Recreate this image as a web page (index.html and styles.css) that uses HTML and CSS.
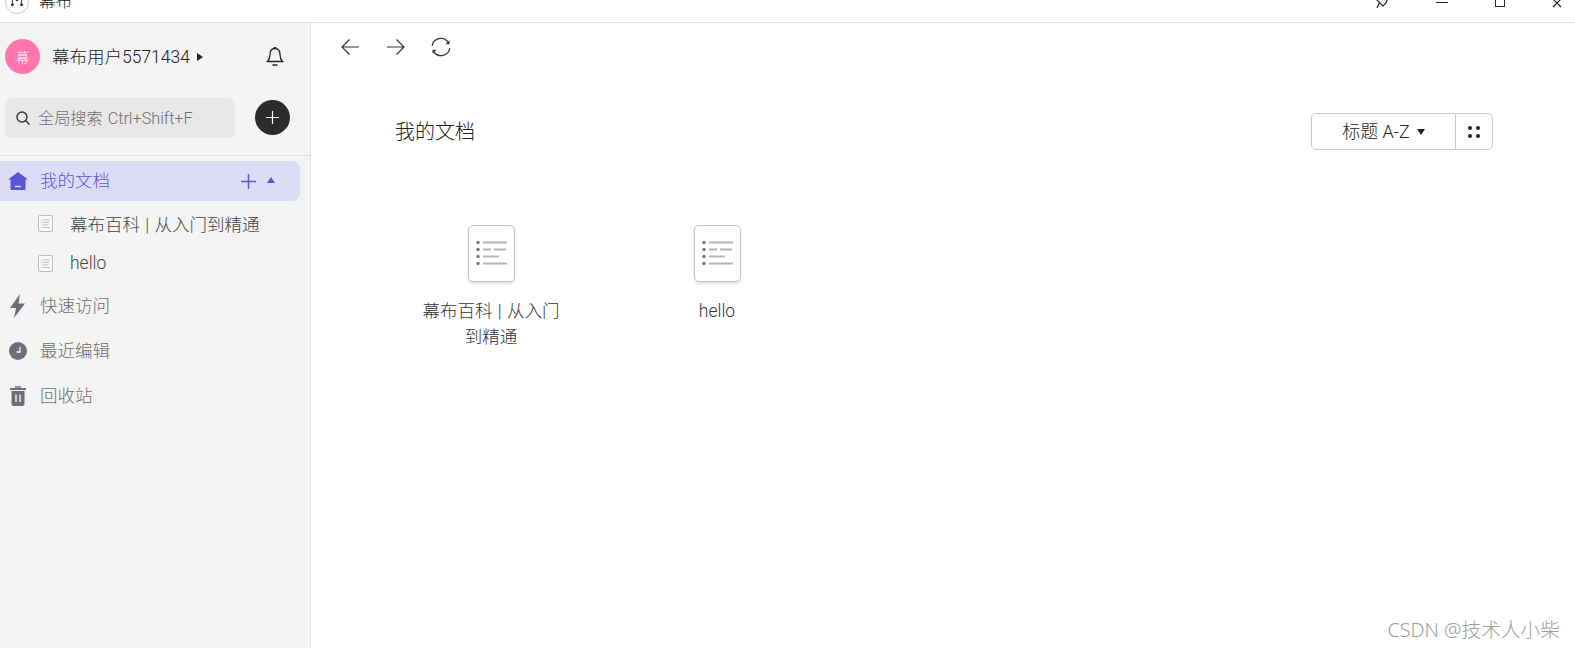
FILE: index.html
```html
<!DOCTYPE html>
<html lang="zh">

<head>
  <meta charset="utf-8" />
  <title>幕布</title>
  <link rel="stylesheet" href="styles.css">
</head>

<body>
  <header class="titlebar">
    <div class="app">
      <span class="app-logo">
        <svg width="24" height="24" viewBox="0 0 24 24">
          <circle cx="7" cy="15" r="1.6" fill="#333"/>
          <circle cx="12" cy="10" r="1.3" fill="#333"/>
          <circle cx="17" cy="15" r="1.6" fill="#333"/>
          <path d="M7 9v5M17 9v5" stroke="#333" fill="none"/>
        </svg>
      </span>
      <span class="app-name">幕布</span>
    </div>
    <div class="win-controls">
      <svg class="win-pin" width="18" height="18" viewBox="0 0 18 18"><path d="M16 4l-3 8-3 3-7-7 3-3M6.500 11.500L4 17" fill="none" stroke="#222" stroke-width="1.200"/></svg>
      <span class="win-min"></span>
      <span class="win-max"></span>
      <svg class="win-close" width="10" height="10" viewBox="0 0 10 10"><path d="M1 1l8 8M9 1l-8 8" stroke="#222" stroke-width="1.100"/></svg>
    </div>
  </header>

  <div class="main">
    <aside class="sidebar">
      <div class="user">
        <span class="avatar">幕</span>
        <span class="user-name">幕布用户5571434</span>
        <span class="caret-right"></span>
        <svg class="bell" width="20" height="22" viewBox="0 0 20 22"><path d="M10 2.500c-3.500 0-5 2.500-5 6 0 3.500-1 5.500-2.500 7h15C16 14 15 12 15 8.500c0-3.500-1.500-6-5-6zM9 2.500C9 1 11 1 11 2.500M7.500 19h5" fill="none" stroke="#222" stroke-width="1.300"/></svg>
      </div>

      <div class="search-row">
        <div class="search">
          <svg width="16" height="16" viewBox="0 0 16 16"><circle cx="7" cy="7" r="5" fill="none" stroke="#333" stroke-width="1.400"/><path d="M10.500 10.500l4 4" stroke="#333" stroke-width="1.400"/></svg>
          <span class="search-text">全局搜索 Ctrl+Shift+F</span>
        </div>
        <button class="add-btn">
          <svg width="13" height="13" viewBox="0 0 13 13"><path d="M6.500 0v13M0 6.500h13" stroke="#fff" stroke-width="1.200"/></svg>
        </button>
      </div>

      <nav class="tree">
        <div class="tree-row active">
          <svg class="tree-icon" width="20" height="18" viewBox="0 0 20 18"><path d="M10 0L0 7.500h2.500V17a1 1 0 0 0 1 1h13a1 1 0 0 0 1-1V7.500H20z" fill="#5856d6"/><path d="M7 14.500h6" stroke="#dcdcf7" stroke-width="1.400"/></svg>
          <span class="tree-label">我的文档</span>
          <svg class="row-plus" width="15" height="15" viewBox="0 0 15 15"><path d="M7.500 0v15M0 7.500h15" stroke="#5856d6" stroke-width="1.500"/></svg>
          <span class="caret-up"></span>
        </div>
        <div class="tree-row child">
          <svg class="doc-mini" width="15" height="17" viewBox="0 0 15 17"><rect x=".5" y=".5" width="14" height="16" rx="1.500" fill="#fafafa" stroke="#bbb"/><path d="M3 5h1M5 5h7M3 7.500h1M5 7.500h6M3 10h1M5 10h5M3 12.500h1M5 12.500h7" stroke="#bbb"/></svg>
          <span class="tree-label">幕布百科 | 从入门到精通</span>
        </div>
        <div class="tree-row child">
          <svg class="doc-mini" width="15" height="17" viewBox="0 0 15 17"><rect x=".5" y=".5" width="14" height="16" rx="1.500" fill="#fafafa" stroke="#bbb"/><path d="M3 5h1M5 5h7M3 7.500h1M5 7.500h6M3 10h1M5 10h5M3 12.500h1M5 12.500h7" stroke="#bbb"/></svg>
          <span class="tree-label">hello</span>
        </div>
        <div class="tree-row muted">
          <svg class="tree-icon" width="18" height="24" viewBox="0 0 18 24"><path d="M11 0L1 14h6l-2 10 11-14.500h-6.500z" fill="#6e6e78"/></svg>
          <span class="tree-label">快速访问</span>
        </div>
        <div class="tree-row muted">
          <svg class="tree-icon" width="18" height="18" viewBox="0 0 18 18"><circle cx="9" cy="9" r="9" fill="#6e6e78"/><path d="M11 5v5H7.500" fill="none" stroke="#f4f4f4" stroke-width="1.300"/></svg>
          <span class="tree-label">最近编辑</span>
        </div>
        <div class="tree-row muted">
          <svg class="tree-icon" width="18" height="20" viewBox="0 0 18 20"><path d="M1 3h16" stroke="#6e6e78" stroke-width="2"/><path d="M6 1h6" stroke="#6e6e78" stroke-width="1.500"/><path d="M2.500 5h13v13a2 2 0 0 1-2 2h-9a2 2 0 0 1-2-2z" fill="#6e6e78"/><path d="M7 8.500v7.500M11 8.500v7.500" stroke="#f4f4f4" stroke-width="1.400"/></svg>
          <span class="tree-label">回收站</span>
        </div>
      </nav>
    </aside>

    <section class="content">
      <div class="toolbar">
        <svg width="20" height="18" viewBox="0 0 20 18"><path d="M19 9H2M9.500 1.500L2 9l7.500 7.500" fill="none" stroke="#333" stroke-width="1.200"/></svg>
        <svg width="20" height="18" viewBox="0 0 20 18"><path d="M1 9h17M10.500 1.500L18 9l-7.500 7.500" fill="none" stroke="#333" stroke-width="1.200"/></svg>
        <svg width="20" height="20" viewBox="0 0 20 20"><path d="M1.200 9A8.800 8.800 0 0 1 17 5M18.800 11A8.800 8.800 0 0 1 3 15" fill="none" stroke="#333" stroke-width="1.300"/><path d="M18.500 3.200v4h-4zM1.500 16.800v-4h4z" fill="#333"/></svg>
      </div>

      <div class="heading-row">
        <h1 class="heading">我的文档</h1>
        <div class="sort-group">
          <button class="sort-btn"><span class="sort-text">标题 A-Z</span><span class="caret-down"></span></button>
          <button class="view-btn">
            <svg width="14" height="14" viewBox="0 0 14 14" fill="#222"><circle cx="3" cy="3" r="2"/><circle cx="11" cy="3" r="2"/><circle cx="3" cy="11" r="2"/><circle cx="11" cy="11" r="2"/></svg>
          </button>
        </div>
      </div>

      <div class="docs">
        <div class="doc">
          <div class="doc-icon">
            <svg width="47" height="57" viewBox="0 0 47 57"><g fill="#777"><circle cx="10" cy="17.500" r="1.700"/><circle cx="10" cy="24.500" r="1.700"/><circle cx="10" cy="31.500" r="1.700"/><circle cx="10" cy="38.500" r="1.700"/></g><path d="M15 17.500h24M15 24.500h8M26 24.500h12M15 31.500h16M15 38.500h24" stroke="#b4b4b4" stroke-width="2" fill="none"/></svg>
          </div>
          <p class="doc-name">幕布百科 | 从入门到精通</p>
        </div>
        <div class="doc">
          <div class="doc-icon">
            <svg width="47" height="57" viewBox="0 0 47 57"><g fill="#777"><circle cx="10" cy="17.500" r="1.700"/><circle cx="10" cy="24.500" r="1.700"/><circle cx="10" cy="31.500" r="1.700"/><circle cx="10" cy="38.500" r="1.700"/></g><path d="M15 17.500h24M15 24.500h8M26 24.500h12M15 31.500h16M15 38.500h24" stroke="#b4b4b4" stroke-width="2" fill="none"/></svg>
          </div>
          <p class="doc-name">hello</p>
        </div>
      </div>

      <div class="watermark">CSDN @技术人小柴</div>
    </section>
  </div>
</body>

</html>
```

FILE: styles.css
```css
/*
  colors:
    sidebar   #f4f4f4
    line      #e2e2e2
    purple    #5856d6
 */
* {
  box-sizing: border-box;
}

html, body {
  height: 100%;
}

body {
  margin: 0;
  height: 648px;
  overflow: hidden;
  display: flex;
  flex-direction: column;
  background-color: #fff;
  color: #333;
  font-family: Roboto, "Noto Sans CJK SC", sans-serif;
  font-size: 17.5px;
  font-weight: 300;
  word-spacing: 1px;
}

button {
  font: inherit;
  color: inherit;
  background: none;
  border: none;
  padding: 0;
}

/* title bar, its top is cut off in the picture */
.titlebar {
  flex: none;
  height: 23px;
  border-bottom: 1px solid #e2e2e2;
  display: flex;
  justify-content: space-between;
  align-items: flex-end;
  overflow: hidden;
}

.app {
  display: flex;
  align-items: center;
  margin-left: 5px;
  margin-bottom: 6px;
}

.app-logo {
  flex: none;
  width: 24px;
  height: 24px;
  border: 1px solid #c8c8c8;
  border-radius: 50%;
  display: flex;
  align-items: center;
  justify-content: center;
}

.app-name {
  margin-left: 10px;
  padding-bottom: 4px;
  color: #222;
  font-size: 16.5px;
}

.win-controls {
  display: flex;
  align-items: flex-end;
  margin-right: 13px;
  margin-bottom: 13px;
}

.win-min {
  width: 12px;
  height: 1px;
  background-color: #222;
  margin-left: 45px;
  margin-bottom: 6px;
}

.win-max {
  width: 10px;
  height: 10px;
  border: 1px solid #222;
  margin-left: 47px;
  margin-bottom: 2px;
}

.win-close {
  margin-left: 47px;
  margin-bottom: 1px;
}

.main {
  flex: 1;
  display: flex;
  min-height: 0;
}

/* sidebar */
.sidebar {
  flex: none;
  width: 311px;
  background-color: #f4f4f4;
  border-right: 1px solid #e2e2e2;
}

.user {
  display: flex;
  align-items: center;
  height: 35px;
  margin-top: 16px;
  padding-left: 5px;
}

.avatar {
  flex: none;
  width: 35px;
  height: 35px;
  border-radius: 50%;
  background-color: #ff75ac;
  color: #fff;
  font-size: 13px;
  display: flex;
  align-items: center;
  justify-content: center;
}

.user-name {
  margin-left: 12px;
  padding-bottom: 3px;
  color: #222;
}

.caret-right {
  margin-left: 7px;
  border-left: 6px solid #222;
  border-top: 4.5px solid transparent;
  border-bottom: 4.5px solid transparent;
}

.bell {
  margin-left: 62px;
}

.search-row {
  display: flex;
  height: 40px;
  margin-top: 24px;
  padding-left: 5px;
}

.search {
  width: 230px;
  height: 40px;
  border-radius: 6px;
  background-color: #e8e8ea;
  display: flex;
  align-items: center;
  gap: 7px;
  padding-left: 10px;
  color: #6e6e6e;
  font-size: 16.2px;
}

.search-text {
  padding-bottom: 2px;
}

.add-btn {
  width: 35px;
  height: 35px;
  margin-top: 2px;
  margin-left: 20px;
  border-radius: 50%;
  background-color: #2c2c2e;
  display: flex;
  align-items: center;
  justify-content: center;
}

.tree {
  margin-top: 17px;
  padding-top: 5px;
  border-top: 1px solid #e2e2e2;
}

.tree-row {
  display: flex;
  align-items: center;
  height: 40px;
  padding-left: 8px;
  color: #444;
}

.tree-row.active {
  width: 300px;
  margin-bottom: 2px;
  border-radius: 0 8px 8px 0;
  background-color: #dcdcf7;
  color: #5856d6;
}

.tree-row.active .tree-label {
  padding-bottom: 3px;
}

.tree-row.child {
  padding-left: 38px;
}

.tree-row.muted {
  height: 45px;
  color: #6e6e6e;
}

.tree-row.muted .tree-label {
  padding-bottom: 2px;
}

.tree-icon {
  flex: none;
  margin-right: 12px;
}

.tree-row.muted .tree-icon {
  margin-left: 1px;
  margin-right: 13px;
}

.doc-mini {
  flex: none;
  margin-right: 17px;
}

.row-plus {
  margin-left: 131px;
}

.caret-up {
  margin-left: 11px;
  margin-bottom: 3px;
  border-bottom: 6px solid #5856d6;
  border-left: 4.5px solid transparent;
  border-right: 4.5px solid transparent;
}

/* content */
.content {
  flex: 1;
  position: relative;
}

.toolbar {
  display: flex;
  align-items: center;
  gap: 25.5px;
  height: 48px;
  padding-left: 29px;
}

.heading-row {
  display: flex;
  align-items: center;
  justify-content: space-between;
  margin-top: 42px;
  padding: 0 82px 0 84px;
}

.heading {
  margin: 0;
  padding-bottom: 2px;
  font-size: 20px;
  font-weight: inherit;
  color: #222;
}

.sort-group {
  display: flex;
  height: 37px;
  border: 1px solid #c8c8c8;
  border-radius: 5px;
}

.sort-btn {
  width: 144px;
  border-right: 1px solid #c8c8c8;
  display: flex;
  align-items: center;
  justify-content: center;
}

.sort-text {
  padding-bottom: 3px;
  color: #222;
  font-size: 18px;
}

.caret-down {
  margin-left: 7px;
  margin-top: 1px;
  border-top: 6px solid #222;
  border-left: 4.5px solid transparent;
  border-right: 4.5px solid transparent;
}

.view-btn {
  width: 36px;
  display: flex;
  align-items: center;
  justify-content: center;
}

.docs {
  display: flex;
  gap: 76px;
  margin-top: 75px;
  padding-left: 105px;
}

.doc {
  width: 150px;
  display: flex;
  flex-direction: column;
  align-items: center;
}

.doc-icon {
  width: 47px;
  height: 57px;
  border: 1px solid #c4c4c4;
  border-radius: 5px;
  box-shadow: 0 2px 3px rgba(0, 0, 0, 0.12);
}

.doc-icon svg {
  display: block;
  margin: -1px;
}

.doc-name {
  margin: 16px 0 0;
  text-align: center;
  line-height: 26px;
  font-size: 17.5px;
  color: #333;
}

.watermark {
  position: absolute;
  right: 15px;
  bottom: 5px;
  color: #a0a0a0;
  font-family: "Noto Sans", "Noto Sans CJK SC", sans-serif;
  font-size: 19.7px;
  word-spacing: 0;
}
```
